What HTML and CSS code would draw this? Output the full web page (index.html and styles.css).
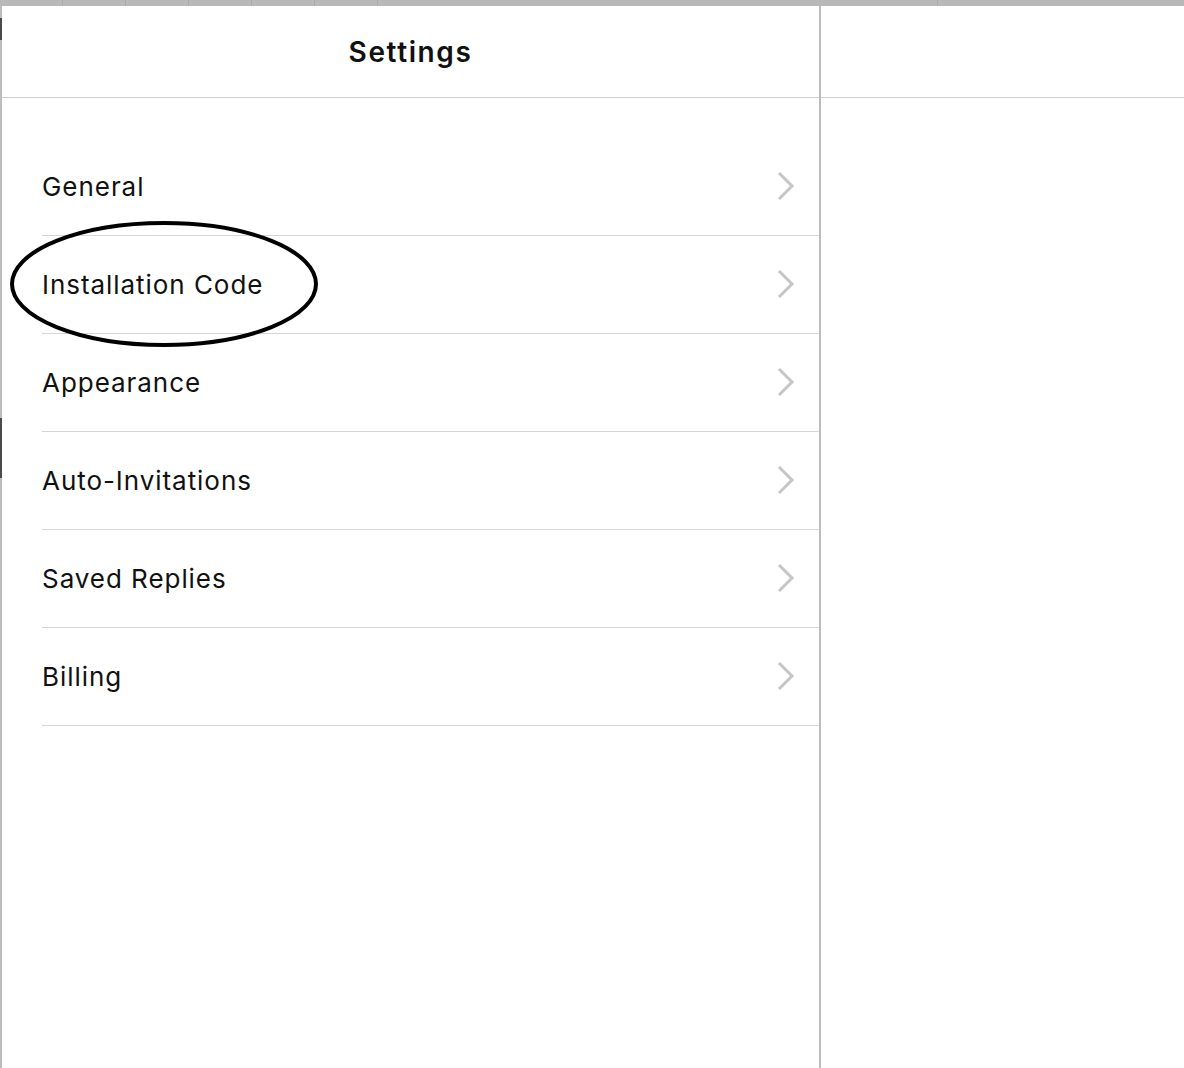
FILE: index.html
```html
<!DOCTYPE html>
<html lang="en">
<head>
<meta charset="utf-8">
<title>Settings</title>
<link rel="stylesheet" href="styles.css">
</head>
<body>
<div class="topbar">
  <span class="tick"></span><span class="tick"></span><span class="tick"></span><span class="tick"></span><span class="tick"></span><span class="tick"></span><span class="tick wide"></span>
</div>
<div class="main">
  <div class="edge">
    <span class="edge-dark first"></span>
    <span class="edge-dark second"></span>
  </div>
  <section class="panel">
    <header class="panel-header"><h1 class="title">Settings</h1></header>
    <ul class="list">
      <li class="row"><span class="label">General</span><svg class="chev" width="18" height="30" viewBox="0 0 18 30"><path d="M2 2 L15 15 L2 28" fill="none" stroke="#c6c6c6" stroke-width="3"/></svg></li>
      <li class="row"><span class="label">Installation Code</span><svg class="chev" width="18" height="30" viewBox="0 0 18 30"><path d="M2 2 L15 15 L2 28" fill="none" stroke="#c6c6c6" stroke-width="3"/></svg></li>
      <li class="row"><span class="label">Appearance</span><svg class="chev" width="18" height="30" viewBox="0 0 18 30"><path d="M2 2 L15 15 L2 28" fill="none" stroke="#c6c6c6" stroke-width="3"/></svg></li>
      <li class="row"><span class="label">Auto-Invitations</span><svg class="chev" width="18" height="30" viewBox="0 0 18 30"><path d="M2 2 L15 15 L2 28" fill="none" stroke="#c6c6c6" stroke-width="3"/></svg></li>
      <li class="row"><span class="label">Saved Replies</span><svg class="chev" width="18" height="30" viewBox="0 0 18 30"><path d="M2 2 L15 15 L2 28" fill="none" stroke="#c6c6c6" stroke-width="3"/></svg></li>
      <li class="row"><span class="label">Billing</span><svg class="chev" width="18" height="30" viewBox="0 0 18 30"><path d="M2 2 L15 15 L2 28" fill="none" stroke="#c6c6c6" stroke-width="3"/></svg></li>
    </ul>
  </section>
  <div class="divider"></div>
  <section class="detail">
    <div class="detail-header"></div>
  </section>
</div>
<svg class="annotation" width="320" height="132" viewBox="0 0 320 132">
  <ellipse cx="155" cy="64" rx="152" ry="61" fill="none" stroke="#000" stroke-width="4"/>
</svg>
</body>
</html>
```

FILE: styles.css
```css
html, body {
  margin: 0;
  padding: 0;
  background: #fff;
  font-family: "Inter", "Liberation Sans", sans-serif;
  color: #111;
}

body {
  width: 1184px;
  height: 1068px;
  overflow: hidden;
  position: relative;
}

.topbar {
  height: 6px;
  background: #b8b8b8;
  display: flex;
}

.tick {
  width: 62px;
  border-right: 1px solid #a9a9a9;
}

.tick.wide {
  width: 559px;
}

.main {
  display: flex;
  height: 1062px;
}

.edge {
  width: 2px;
  background: #bcbcbc;
  display: flex;
  flex-direction: column;
}

.edge-dark {
  display: block;
  width: 2px;
  background: #4a4a4a;
}

.edge-dark.first {
  margin-top: 12px;
  height: 22px;
}

.edge-dark.second {
  margin-top: 378px;
  height: 60px;
}

.panel {
  width: 817px;
  display: flex;
  flex-direction: column;
}

.panel-header {
  height: 91px;
  border-bottom: 1px solid #cfcfcf;
  display: flex;
  align-items: center;
  justify-content: center;
}

.title {
  margin: 0;
  font-size: 28px;
  font-weight: 600;
  letter-spacing: 1.6px;
  color: #111;
}

.list {
  list-style: none;
  margin: 0;
  padding: 40px 0 0 40px;
}

.row {
  height: 97px;
  border-bottom: 1px solid #d6d6d6;
  display: flex;
  align-items: center;
  justify-content: space-between;
  padding-right: 24px;
}

.label {
  font-size: 26px;
  letter-spacing: 0.95px;
  color: #111;
}

.chev {
  display: block;
  margin-top: -2px;
}

.divider {
  width: 2px;
  background: #bcbcbc;
}

.detail {
  flex: 1;
}

.detail-header {
  height: 91px;
  border-bottom: 1px solid #cfcfcf;
}

.annotation {
  position: absolute;
  left: 9px;
  top: 220px;
}
```
